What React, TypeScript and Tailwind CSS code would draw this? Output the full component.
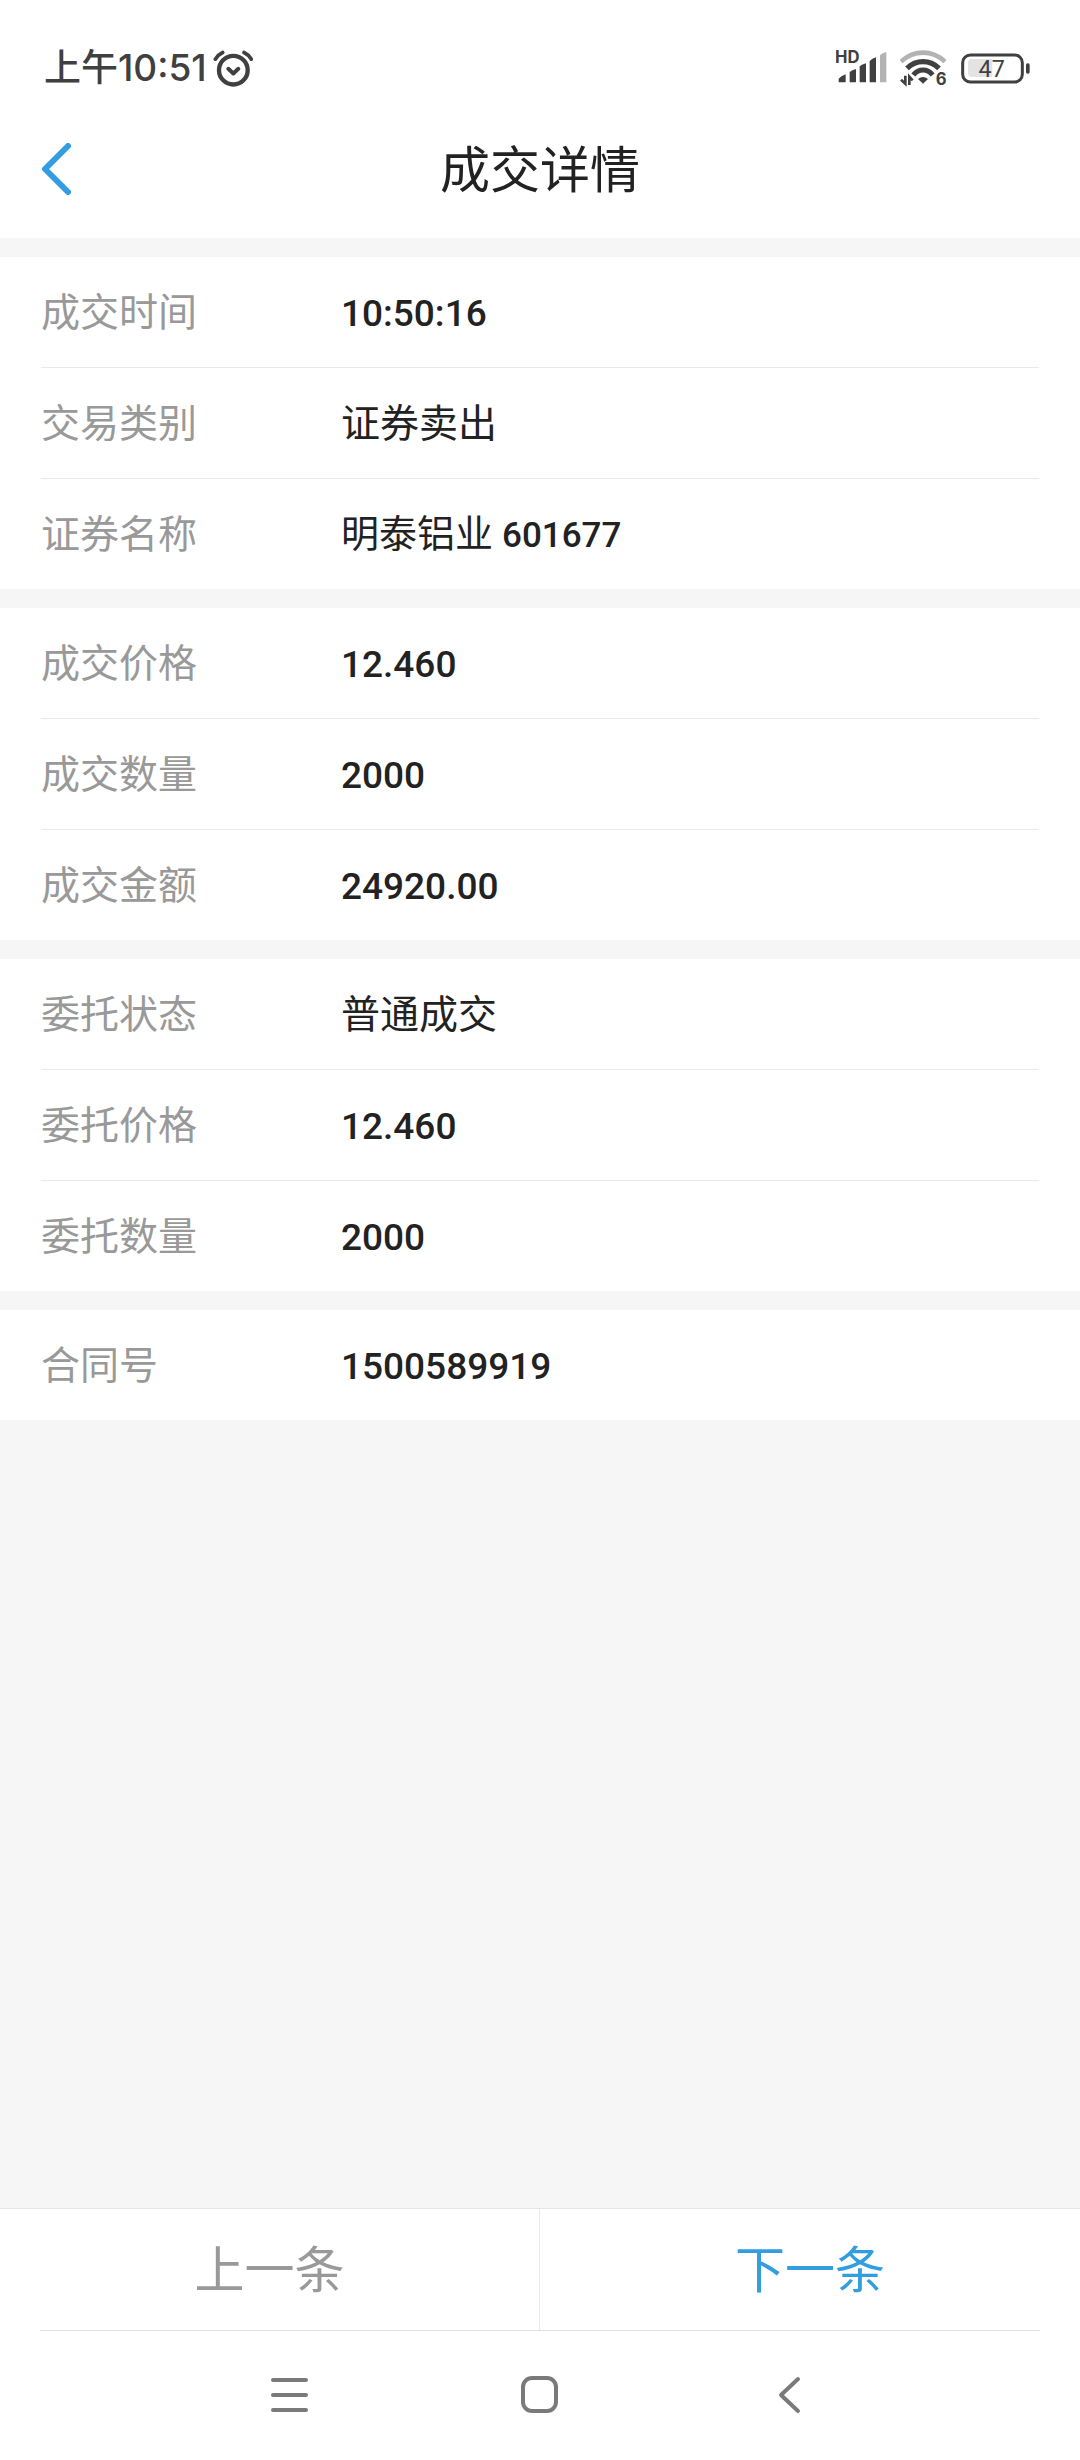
import React from 'react'
import { clsx } from 'clsx'

interface DetailRow {
  label: string
  value: string
  numeric?: boolean
  code?: string
}

const SECTIONS: DetailRow[][] = [
  [
    { label: '成交时间', value: '10:50:16', numeric: true },
    { label: '交易类别', value: '证券卖出' },
    { label: '证券名称', value: '明泰铝业', code: '601677' },
  ],
  [
    { label: '成交价格', value: '12.460', numeric: true },
    { label: '成交数量', value: '2000', numeric: true },
    { label: '成交金额', value: '24920.00', numeric: true },
  ],
  [
    { label: '委托状态', value: '普通成交' },
    { label: '委托价格', value: '12.460', numeric: true },
    { label: '委托数量', value: '2000', numeric: true },
  ],
  [{ label: '合同号', value: '1500589919', numeric: true }],
]

const AlarmIcon = () => (
  <svg viewBox="0 0 120 110" className="w-[40px] h-[37px]" fill="none" stroke="#404040" strokeLinecap="round">
    <circle cx="61" cy="60" r="43" strokeWidth="13" />
    <path d="M7 27Q16 13 29 7M93 7Q106 13 115 27" strokeWidth="11" />
    <path d="M46 56L61 70L76 56" strokeWidth="12" strokeLinejoin="round" />
  </svg>
)

const SignalIcon = () => (
  <svg viewBox="0 -12 156 132" className="w-[52px] h-[44px]" fill="#404040">
    <text x="-3" y="38" fontSize="50" fontWeight="700" fontFamily="Inter, sans-serif">HD</text>
    <path d="M8 97V86Q14 78 29 73V95Q29 97 27 97H10Q8 97 8 95Z" />
    <path d="M41 97V66Q48 60 60 57V95Q60 97 58 97H43Q41 97 41 95Z" />
    <path d="M71 97V49Q78 43 90 40V95Q90 97 88 97H73Q71 97 71 95Z" />
    <path d="M101 97V33Q108 26 120 22V95Q120 97 118 97H103Q101 97 101 95Z" />
    <path d="M132 97V16Q138 9 151 6V95Q151 97 149 97H134Q132 97 132 95Z" fill="#b3b3b3" />
  </svg>
)

const WifiIcon = () => (
  <svg viewBox="0 -12 147 132" className="w-[49px] h-[44px]" fill="none" stroke="#404040">
    <path d="M3 35Q32 8 69 8T135 35" stroke="#b3b3b3" strokeWidth="14" />
    <path d="M21 55Q42 35 69 35T117 55" strokeWidth="16" />
    <path d="M40 75Q52 60 69 60T98 75" strokeWidth="15" />
    <path d="M69 101L54 87Q69 75 84 87Z" fill="#404040" stroke="none" />
    <path d="M16 77V101L3 89M28 105V80L38 91" strokeWidth="8" />
    <text x="107" y="104" fontSize="50" fontWeight="700" fill="#404040" stroke="none" fontFamily="Inter, sans-serif">6</text>
  </svg>
)

const BatteryIcon = () => (
  <svg viewBox="0 0 207 93" className="w-[69px] h-[31px]">
    <rect x="5" y="6" width="179" height="81" rx="23" fill="none" stroke="#404040" strokeWidth="9" />
    <path d="M33 18H94V72H33Q21 72 21 60V30Q21 18 33 18Z" fill="#e3e3e3" />
    <rect x="195" y="31" width="11" height="31" rx="5" fill="#404040" />
    <text x="92" y="71" fontSize="70" textAnchor="middle" fill="#404040" fontFamily="Roboto, sans-serif">47</text>
  </svg>
)

const StatusBar = () => (
  <div className="flex h-[100px] items-center justify-between pt-[36px] pl-[44px] pr-[50px] text-[#404040]">
    <div className="flex items-center gap-[6px]">
      <div className="flex items-center text-[37px] leading-[48px] font-medium">
        <span className="pb-[6px]">上午</span>
        <span className="font-['Inter']">10:51</span>
      </div>
      <AlarmIcon />
    </div>
    <div className="flex items-center gap-3">
      <SignalIcon />
      <WifiIcon />
      <BatteryIcon />
    </div>
  </div>
)

const Header = () => (
  <header className="grid h-[138px] grid-cols-[1fr_auto_1fr] items-center px-[41px]">
    <button type="button" aria-label="返回" className="justify-self-start">
      <svg viewBox="0 0 30 52" className="w-[30px] h-[52px]" fill="none" stroke="#339de1" strokeWidth="6" strokeLinecap="round" strokeLinejoin="round">
        <path d="M27 3L4 26L27 49" />
      </svg>
    </button>
    <h1 className="pb-[6px] text-[50px] leading-[60px]">成交详情</h1>
  </header>
)

const Row = ({ label, value, numeric, code }: DetailRow) => (
  <div className="flex h-[111px] items-center border-b border-[#e9e9e9] text-[39px] leading-[56px] last:h-[110px] last:border-b-0">
    <dt className="w-[300px] shrink-0 pb-[6px] text-[#999]">{label}</dt>
    <dd className={clsx('flex items-center', code && 'gap-[9px] text-[38px]')}>
      <span className={numeric ? "pt-[4px] font-['Roboto'] text-[37px] font-medium" : 'pb-[6px]'}>{value}</span>
      {code && <span className="pt-[4px] font-['Roboto'] text-[35px] font-medium">{code}</span>}
    </dd>
  </div>
)

const Pager = () => (
  <div className="border-t border-[#e5e5e5]">
    <div className="grid h-[121px] grid-cols-2 text-[50px] leading-[60px]">
      <button type="button" className="border-r border-[#e9e9e9] pb-[8px] text-[#999]">上一条</button>
      <button type="button" className="pb-[8px] text-[#339de1]">下一条</button>
    </div>
    <div className="mx-[40px] border-b border-[#e0e0e0]" />
  </div>
)

// Android system navigation
const NavBar = () => (
  <nav className="flex h-[129px] items-center justify-center gap-[210px]">
    <button type="button" aria-label="最近任务">
      <svg viewBox="0 0 40 40" className="size-[40px]" stroke="#7a7a7a" strokeWidth="4" strokeLinecap="round">
        <path d="M3 4H36M3 19H36M3 34H36" />
      </svg>
    </button>
    <button type="button" aria-label="主屏幕">
      <svg viewBox="0 0 40 40" className="size-[40px]" fill="none" stroke="#7a7a7a" strokeWidth="4">
        <rect x="3" y="2" width="33" height="33" rx="9" />
      </svg>
    </button>
    <button type="button" aria-label="返回上一页">
      <svg viewBox="0 0 40 40" className="size-[40px]" fill="none" stroke="#7a7a7a" strokeWidth="4" strokeLinecap="round" strokeLinejoin="round">
        <path d="M28 3L11 19L28 35" />
      </svg>
    </button>
  </nav>
)

export default function App() {
  return (
    <div className="flex min-h-screen flex-col bg-white font-['Noto_Sans_CJK_SC',sans-serif] text-[#222]">
      <StatusBar />
      <Header />
      <main className="flex flex-1 flex-col gap-[19px] bg-[#f6f6f6] pt-[19px]">
        {SECTIONS.map((rows) => (
          <dl key={rows[0].label} className="bg-white px-[41px]">
            {rows.map((row) => (
              <Row key={row.label} {...row} />
            ))}
          </dl>
        ))}
      </main>
      <Pager />
      <NavBar />
    </div>
  )
}
